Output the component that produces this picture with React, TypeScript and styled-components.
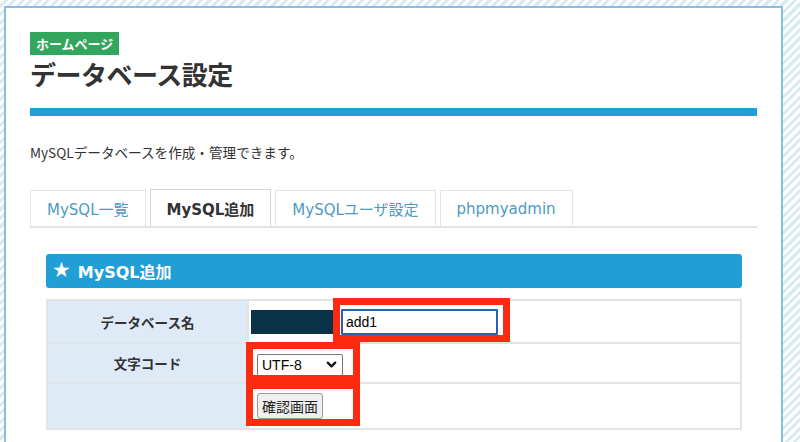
import React from "react";
import styled, { createGlobalStyle } from "styled-components";
import { ChevronDown } from "lucide-react";

const GlobalStyle = createGlobalStyle`
  html, body {
    margin: 0;
    padding: 0;
  }
  body {
    height: 442px;
    overflow: hidden;
    font-family: "Noto Sans CJK JP", "Noto Sans", sans-serif;
    color: #333;
    background-color: #ffffff;
    background-image: repeating-linear-gradient(
      135deg,
      #ffffff 0px,
      #ffffff 3px,
      #d9eaf5 3px,
      #d9eaf5 6px
    );
  }
`;

const Panel = styled.main`
  margin: 6px 17px 0 4px;
  background: #ffffff;
  border: 2px solid #86c0e1;
  border-bottom: none;
  padding: 24px 24px 40px;
  min-height: 420px;
  box-sizing: border-box;
`;

const Badge = styled.div`
  width: fit-content;
  height: 23px;
  line-height: 23px;
  padding: 0 6px;
  background: #33a65e;
  color: #fff;
  font-size: 13px;
  font-weight: 700;
`;

const Title = styled.h1`
  margin: 3px 0 0;
  font-size: 26px;
  line-height: 32px;
  font-weight: 700;
  color: #333;
  letter-spacing: -0.5px;
`;

const Bar = styled.div`
  margin-top: 18px;
  height: 8px;
  background: #229ed7;
`;

const Description = styled.p`
  margin: 26px 0 0;
  font-size: 13.6px;
  line-height: 20px;
  color: #333;
`;

const TabRow = styled.nav`
  margin-top: 27px;
  display: flex;
  align-items: flex-end;
  gap: 4px;
  border-bottom: 2px solid #e3e3e3;
`;

const Tab = styled.div<{ $active?: boolean }>`
  height: ${(p) => (p.$active ? 37 : 36)}px;
  box-sizing: border-box;
  padding: 0 16px;
  display: flex;
  align-items: center;
  justify-content: center;
  border: 1px solid ${(p) => (p.$active ? "#d6d6d6" : "#e4e4e4")};
  border-bottom: none;
  background: #fff;
  font-family: "DejaVu Sans", "Noto Sans CJK JP", sans-serif;
  font-size: 15px;
  font-weight: ${(p) => (p.$active ? 700 : 400)};
  color: ${(p) => (p.$active ? "#333" : "#4d9ac2")};
  white-space: nowrap;
`;

const Section = styled.section`
  margin-top: 26px;
  padding: 0 15px 0 16px;
`;

const SectionHeader = styled.h2`
  margin: 0;
  height: 34px;
  display: flex;
  align-items: center;
  gap: 7px;
  padding-left: 6px;
  border-radius: 3px;
  background: #229ed7;
  color: #fff;
  font-family: "DejaVu Sans", "Noto Sans CJK JP", sans-serif;
  font-size: 16px;
  font-weight: 700;
`;

const Star = styled.span`
  font-size: 21px;
  line-height: 1;
  font-family: "DejaVu Sans", sans-serif;
  margin-top: -2px;
`;

const TableWrap = styled.div`
  position: relative;
  margin-top: 11px;
`;

const Table = styled.table`
  width: 100%;
  border-collapse: collapse;
  border: 2px solid #e3e3e3;
`;

const Row = styled.tr<{ $h: number }>`
  height: ${(p) => p.$h}px;
  border-bottom: 2px solid #e3e3e3;
`;

const Label = styled.th`
  width: 199px;
  padding: 0;
  background: #deebf7;
  border-right: 2px solid #e3e3e3;
  font-size: 13.5px;
  font-weight: 700;
  color: #333;
  text-align: center;
`;

const Cell = styled.td<{ $pl: number }>`
  padding: 0 0 0 ${(p) => p.$pl}px;
  background: #fff;
`;

const CellFlex = styled.div`
  display: flex;
  align-items: center;
  gap: 8px;
`;

const Masked = styled.div`
  width: 82px;
  height: 24px;
  background: #0a3348;
`;

const TextInput = styled.input`
  width: 157px;
  height: 26px;
  box-sizing: border-box;
  border: 2px solid #2c62ad;
  border-radius: 1px;
  padding: 0 3px;
  font-family: "Liberation Sans", Arial, sans-serif;
  font-size: 14px;
  color: #000;
  outline: none;
`;

const SelectWrap = styled.span`
  position: relative;
  display: inline-flex;
`;

const Select = styled.select`
  appearance: none;
  width: 86px;
  height: 22px;
  box-sizing: border-box;
  border: 1px solid #7a7a7a;
  border-radius: 2px;
  background: #fff;
  padding: 0 4px;
  font-family: "Liberation Sans", Arial, sans-serif;
  font-size: 14px;
  color: #000;
`;

const SelectArrow = styled.span`
  position: absolute;
  right: 4px;
  top: 3px;
  pointer-events: none;
  display: flex;
  color: #111;
`;

const Button = styled.button`
  height: 26px;
  padding: 0 4px;
  border: 1px solid #9a9a9a;
  border-radius: 3px;
  background: #efefef;
  font-family: "Noto Sans CJK JP", sans-serif;
  font-size: 14px;
  color: #222;
`;

const RedFrame = styled.div<{ $l: number; $t: number; $w: number; $h: number }>`
  position: absolute;
  left: ${(p) => p.$l}px;
  top: ${(p) => p.$t}px;
  width: ${(p) => p.$w}px;
  height: ${(p) => p.$h}px;
  box-sizing: border-box;
  border: 7px solid #fd2a12;
  pointer-events: none;
`;

export default function App() {
  return (
    <>
      <GlobalStyle />
      <Panel>
        <Badge>ホームページ</Badge>
        <Title>データベース設定</Title>
        <Bar />
        <Description>MySQLデータベースを作成・管理できます。</Description>
        <TabRow>
          <Tab>MySQL一覧</Tab>
          <Tab $active>MySQL追加</Tab>
          <Tab>MySQLユーザ設定</Tab>
          <Tab>phpmyadmin</Tab>
        </TabRow>
        <Section>
          <SectionHeader>
            <Star>★</Star>
            MySQL追加
          </SectionHeader>
          <TableWrap>
            <Table>
              <tbody>
                <Row $h={43}>
                  <Label>データベース名</Label>
                  <Cell $pl={2}>
                    <CellFlex>
                      <Masked />
                      <TextInput defaultValue="add1" />
                    </CellFlex>
                  </Cell>
                </Row>
                <Row $h={40}>
                  <Label>文字コード</Label>
                  <Cell $pl={8}>
                    <SelectWrap>
                      <Select defaultValue="UTF-8">
                        <option>UTF-8</option>
                        <option>EUC-JP</option>
                        <option>SJIS</option>
                      </Select>
                      <SelectArrow>
                        <ChevronDown size={15} strokeWidth={3.5} />
                      </SelectArrow>
                    </SelectWrap>
                  </Cell>
                </Row>
                <Row $h={46}>
                  <Label />
                  <Cell $pl={8}>
                    <Button>確認画面</Button>
                  </Cell>
                </Row>
              </tbody>
            </Table>
            <RedFrame $l={287} $t={-1} $w={177} $h={44} />
            <RedFrame $l={200} $t={43} $w={114} $h={40} />
            <RedFrame $l={200} $t={83} $w={114} $h={44} />
          </TableWrap>
        </Section>
      </Panel>
    </>
  );
}
